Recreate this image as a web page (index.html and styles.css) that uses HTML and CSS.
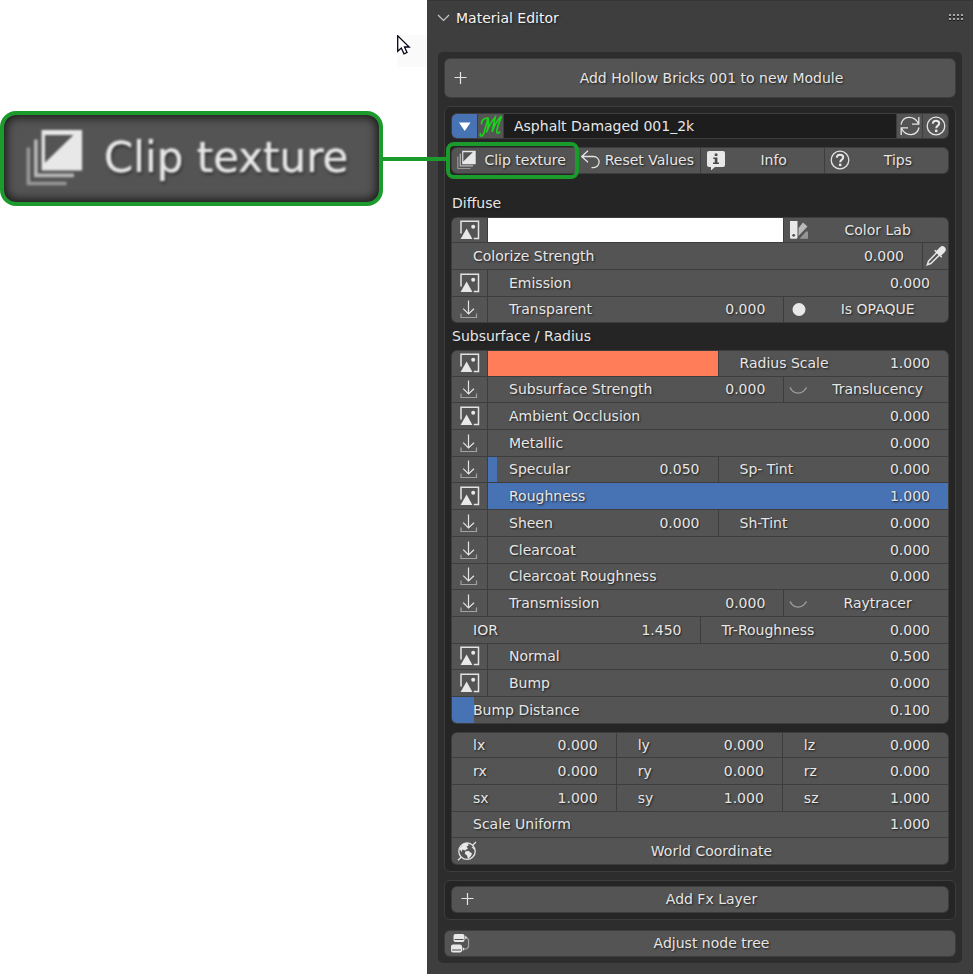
FILE: index.html
```html
<!DOCTYPE html>
<html lang="en">
<head>
<meta charset="utf-8">
<title>Material Editor</title>
<link rel="stylesheet" href="styles.css">
</head>
<body>
<svg class="defs" aria-hidden="true">
  <symbol id="i-image" viewBox="0 0 20 20">
    <path d="M1 13.500V1.200H18.500V18.500H13.800" fill="none" stroke="#e4e4e4" stroke-width="1.500"/>
    <path d="M.6 19 6.600 8.600 12.400 19Z" fill="#e8e8e8"/><circle cx="13.200" cy="6.800" r="2" fill="#e8e8e8"/>
  </symbol>
  <symbol id="i-down" viewBox="0 0 20 20">
    <path d="M1 14.500v4h15.500v-4" fill="none" stroke="#a2a2a2" stroke-width="1.200"/>
    <path d="M8.500 1.500V15M3.200 9.700 8.500 15l5.500-5.300" fill="none" stroke="#e4e4e4" stroke-width="1.200"/>
  </symbol>
  <symbol id="i-layers" viewBox="0 0 20 20">
    <path d="M.8 6.500v12h12.700" fill="none" stroke="#989898" stroke-width="1.200"/>
    <path d="M3.300 3.800V15.800H16" fill="none" stroke="#b8b8b8" stroke-width="1.200"/>
    <path d="M5.200.7H18.700V14.200H5.200ZM6.300 2.300V11.600L15.800 2.300Z" fill="#e8e8e8" fill-rule="evenodd"/>
  </symbol>
  <symbol id="i-undo" viewBox="0 0 20 20">
    <path d="M7 .8.8 6.500 7 12.200M.8 6.500H12.500a5.600 5.600 0 0 1 0 11.200h-2" fill="none" stroke="#e4e4e4" stroke-width="1.300"/>
  </symbol>
  <symbol id="i-info" viewBox="0 0 20 20">
    <path d="M3 1H17a2 2 0 0 1 2 2V15a2 2 0 0 1-2 2H9L5 20.500V17H3a2 2 0 0 1-2-2V3a2 2 0 0 1 2-2Z" fill="#e8e8e8"/>
    <path d="M8.800 3.500h2.600V6H8.800ZM7.300 7.500h4.100v5h1.600V14H7v-1.500h1.800V9H7.300Z" fill="#484848"/>
  </symbol>
  <symbol id="i-help" viewBox="0 0 20 20">
    <circle cx="10" cy="10" r="8.800" fill="none" stroke="#e4e4e4" stroke-width="1.300"/>
    <path d="M6.800 7.600C6.900 5.500 8.200 4.700 10 4.700s3.200 1.100 3.200 2.700c0 2.200-3 2.300-3 4.800" fill="none" stroke="#e8e8e8" stroke-width="2"/>
    <circle cx="10.200" cy="14.900" r="1.400" fill="#e8e8e8"/>
  </symbol>
  <symbol id="i-refresh" viewBox="0 0 20 20">
    <path d="M1 8.500C3-.5 14-1 18.500 7.500M18.800 1V8.200H12M19 11.500C17 20.500 6 21 1.500 12.500M1.200 19V11.800H8" fill="none" stroke="#e4e4e4" stroke-width="1.300"/>
  </symbol>
  <symbol id="i-swatches" viewBox="0 0 20 20">
    <path d="M9.500 8 14 2.500 18.500 6.500 9.500 16Z" fill="#b9b9b9"/>
    <path d="M10.500 18.800 17 11.500h2v7.300Z" fill="#959595"/>
    <path d="M1 1H8.500V16.500a2 2 0 0 1-2 2.300H3a2 2 0 0 1-2-2.300Z" fill="#e8e8e8"/><circle cx="4.700" cy="15.300" r="1.400" fill="#505050"/>
  </symbol>
  <symbol id="i-dropper" viewBox="0 0 20 20">
    <path d="M11 6.300 2.500 15.200 1.300 18.700 4.800 17.500 13.500 9" fill="none" stroke="#e4e4e4" stroke-width="1.500"/>
    <path d="M8.700 4.200 15.700 11.200M10.500 5.700 14.500 1.700a2.600 2.600 0 0 1 3.800 3.800L14.300 9.500Z" fill="#e8e8e8" stroke="#e8e8e8" stroke-width="1.500"/>
  </symbol>
  <symbol id="i-dot" viewBox="0 0 20 20"><circle cx="10" cy="10.500" r="6.500" fill="#e8e8e8"/></symbol>
  <symbol id="i-closed" viewBox="0 0 20 20"><path d="M1 8.500C5 16 13 16 17.500 8.500" fill="none" stroke="#a2a2a2" stroke-width="1.400"/></symbol>
  <symbol id="i-plus" viewBox="0 0 20 20"><path d="M10.500 4V16M4.500 9.500H16.500" fill="none" stroke="#e4e4e4" stroke-width="1.200"/></symbol>
  <symbol id="i-globe" viewBox="0 0 20 20">
    <circle cx="10" cy="10.200" r="8.200" fill="none" stroke="#e4e4e4" stroke-width="1.300"/>
    <path d="M15.500 4.500 19 1M4.300 16 1 19.300" stroke="#e4e4e4" stroke-width="1.300"/>
    <path d="M2.500 7.500 6 3.200 10.500 2l1.200 2.500-2.200 1L11 7.500 8 9.500 5.500 8.500 4.500 11ZM8.300 10.500l3-.8 3.700 2.800-1 2.600-3 2.900-1-3.500-2.200-1.800ZM14.500 6l1.800-.5 1.500 4Z" fill="#e8e8e8"/>
  </symbol>
  <symbol id="i-nodes" viewBox="0 0 20 20">
    <rect x="3.500" y="1" width="11" height="8" rx="2" fill="#e8e8e8"/><path d="M4.500 6.500h9" stroke="#505050"/>
    <rect x="1" y="11.500" width="11" height="8" rx="2" fill="#e8e8e8"/><path d="M2 17h9" stroke="#505050"/>
    <path d="M15 4.500h1.500l2 2v7.500l-2 2H13" fill="none" stroke="#a2a2a2" stroke-width="1.200"/><path d="m15.300 2.500 2 2-2 2ZM12.700 14l2 2-2 2Z" fill="#e8e8e8"/>
  </symbol>
  <symbol id="i-mark" viewBox="0 0 22 22">
    <path d="M1.500 17.500C0 20.500 3 21.500 4.500 17.500L8.500 3.500C9 9 8.500 13 6.800 17 9 11 12.500 5.500 14.800 3 14 8 12.500 13 12 16.500 14 10.500 17.500 5 20.500 2 19 7 16.500 12.500 16.300 16 16.300 18.500 18 18 19.300 16M2.500 9.500C1.500 6 5 3.500 8.300 3.800" fill="none" stroke="#1bd31b" stroke-width="1.500"/>
  </symbol>
</svg>
<main class="page">
  <aside class="guide">
    <div class="pointer"><svg width="14" height="21" viewBox="0 0 14 21"><path d="M.7.800V16.300L4.300 13 7 18.800 10 17.500 7.500 12H12.200Z" fill="#fff" stroke="#05051a" stroke-width="1.300"/></svg></div>
    <div class="callout">
      <div class="callout-card"><svg class="callout-icon"><use href="#i-layers"/></svg><span>Clip texture</span></div>
      <div class="callout-line"></div>
    </div>
  </aside>
  <section class="panel">
    <header class="panel-head">
      <svg class="chevron" viewBox="0 0 13 8"><path d="M1 1 6.500 6.500 12 1" fill="none" stroke="#c8c8c8" stroke-width="1.200"/></svg>
      <h1>Material Editor</h1>
      <svg class="grip" viewBox="0 0 15 8"><path d="M0 2.500h15M0 6.500h15" stroke="#171717" stroke-width="1" stroke-dasharray="2 2"/><path d="M0 1h15M0 5h15" stroke="#a8a8a8" stroke-width="2" stroke-dasharray="2 2"/></svg>
    </header>
    <div class="body">
      <div class="group"><div class="row row-big"><button class="cell btn"><svg><use href="#i-plus"/></svg><span>Add Hollow Bricks 001 to new Module</span></button></div></div>

      <div class="card">
        <div class="group">
          <div class="row slim">
            <button class="cell square active" aria-label="Expand"><svg viewBox="0 0 20 20"><path d="M4 6.500h11.500L9.700 15Z" fill="#fff"/></svg></button>
            <button class="cell square" aria-label="Material"><svg class="mark"><use href="#i-mark"/></svg></button>
            <input class="cell name" aria-label="Material name" value="Asphalt Damaged 001_2k">
            <button class="cell square" aria-label="Refresh"><svg><use href="#i-refresh"/></svg></button>
            <button class="cell square" aria-label="Help"><svg><use href="#i-help"/></svg></button>
          </div>
        </div>
        <div class="group tools">
          <div class="row short">
            <button class="cell btn marked"><svg><use href="#i-layers"/></svg><span>Clip texture</span></button>
            <button class="cell btn"><svg><use href="#i-undo"/></svg><span>Reset Values</span></button>
            <button class="cell btn"><svg><use href="#i-info"/></svg><span>Info</span></button>
            <button class="cell btn"><svg><use href="#i-help"/></svg><span>Tips</span></button>
          </div>
        </div>

        <h2 class="first">Diffuse</h2>
        <div class="group">
          <div class="row slim"><button class="cell pic" aria-label="Diffuse image"><svg><use href="#i-image"/></svg></button><input class="cell swatch" type="color" value="#ffffff" aria-label="Diffuse color"><button class="cell btn third"><svg><use href="#i-swatches"/></svg><span>Color Lab</span></button></div>
          <div class="row"><label class="cell field"><span>Colorize Strength</span><input value="0.000"></label><button class="cell square" aria-label="Pick color"><svg><use href="#i-dropper"/></svg></button></div>
          <div class="row"><button class="cell pic" aria-label="Emission image"><svg><use href="#i-image"/></svg></button><label class="cell field"><span>Emission</span><input value="0.000"></label></div>
          <div class="row short"><button class="cell pic" aria-label="Load transparent"><svg><use href="#i-down"/></svg></button><label class="cell field"><span>Transparent</span><input value="0.000"></label><button class="cell btn third"><svg><use href="#i-dot"/></svg><span>Is OPAQUE</span></button></div>
        </div>

        <h2>Subsurface / Radius</h2>
        <div class="group">
          <div class="row short"><button class="cell pic" aria-label="Subsurface image"><svg><use href="#i-image"/></svg></button><div class="half"><input class="cell swatch" type="color" value="#ff7e59" aria-label="Subsurface color"></div><div class="half"><label class="cell field"><span>Radius Scale</span><input value="1.000"></label></div></div>
          <div class="row short"><button class="cell pic" aria-label="Load subsurface"><svg><use href="#i-down"/></svg></button><label class="cell field"><span>Subsurface Strength</span><input value="0.000"></label><button class="cell btn third"><svg><use href="#i-closed"/></svg><span>Translucency</span></button></div>
          <div class="row"><button class="cell pic" aria-label="Ambient occlusion image"><svg><use href="#i-image"/></svg></button><label class="cell field"><span>Ambient Occlusion</span><input value="0.000"></label></div>
          <div class="row"><button class="cell pic" aria-label="Load metallic"><svg><use href="#i-down"/></svg></button><label class="cell field"><span>Metallic</span><input value="0.000"></label></div>
          <div class="row short"><button class="cell pic" aria-label="Load specular"><svg><use href="#i-down"/></svg></button><label class="cell field fill" style="--fill:4%"><span>Specular</span><input value="0.050"></label><label class="cell field"><span>Sp- Tint</span><input value="0.000"></label></div>
          <div class="row"><button class="cell pic" aria-label="Roughness image"><svg><use href="#i-image"/></svg></button><label class="cell field fill" style="--fill:100%"><span>Roughness</span><input value="1.000"></label></div>
          <div class="row"><button class="cell pic" aria-label="Load sheen"><svg><use href="#i-down"/></svg></button><label class="cell field"><span>Sheen</span><input value="0.000"></label><label class="cell field"><span>Sh-Tint</span><input value="0.000"></label></div>
          <div class="row"><button class="cell pic" aria-label="Load clearcoat"><svg><use href="#i-down"/></svg></button><label class="cell field"><span>Clearcoat</span><input value="0.000"></label></div>
          <div class="row short"><button class="cell pic" aria-label="Load clearcoat roughness"><svg><use href="#i-down"/></svg></button><label class="cell field"><span>Clearcoat Roughness</span><input value="0.000"></label></div>
          <div class="row"><button class="cell pic" aria-label="Load transmission"><svg><use href="#i-down"/></svg></button><label class="cell field"><span>Transmission</span><input value="0.000"></label><button class="cell btn third"><svg><use href="#i-closed"/></svg><span>Raytracer</span></button></div>
          <div class="row"><label class="cell field"><span>IOR</span><input value="1.450"></label><label class="cell field"><span>Tr-Roughness</span><input value="0.000"></label></div>
          <div class="row short"><button class="cell pic" aria-label="Normal image"><svg><use href="#i-image"/></svg></button><label class="cell field"><span>Normal</span><input value="0.500"></label></div>
          <div class="row"><button class="cell pic" aria-label="Bump image"><svg><use href="#i-image"/></svg></button><label class="cell field"><span>Bump</span><input value="0.000"></label></div>
          <div class="row"><label class="cell field fill" style="--fill:4.500%"><span>Bump Distance</span><input value="0.100"></label></div>
        </div>

        <div class="group transform">
          <div class="row slim"><label class="cell field third"><span>lx</span><input value="0.000"></label><label class="cell field"><span>ly</span><input value="0.000"></label><label class="cell field"><span>lz</span><input value="0.000"></label></div>
          <div class="row"><label class="cell field third"><span>rx</span><input value="0.000"></label><label class="cell field"><span>ry</span><input value="0.000"></label><label class="cell field"><span>rz</span><input value="0.000"></label></div>
          <div class="row"><label class="cell field third"><span>sx</span><input value="1.000"></label><label class="cell field"><span>sy</span><input value="1.000"></label><label class="cell field"><span>sz</span><input value="1.000"></label></div>
          <div class="row short"><label class="cell field"><span>Scale Uniform</span><input value="1.000"></label></div>
          <div class="row"><button class="cell btn"><svg><use href="#i-globe"/></svg><span>World Coordinate</span></button></div>
        </div>
      </div>

      <div class="card card-fx"><div class="group"><div class="row short"><button class="cell btn"><svg><use href="#i-plus"/></svg><span>Add Fx Layer</span></button></div></div></div>
      <div class="group"><div class="row short"><button class="cell btn"><svg><use href="#i-nodes"/></svg><span>Adjust node tree</span></button></div></div>
    </div>
  </section>
</main>
</body>
</html>
```
FILE: styles.css
```css
* { box-sizing: border-box; }

body {
  margin: 0;
  background: #fff;
  color: #e6e6e6;
  font: 14px/18px "DejaVu Sans", sans-serif;
}

button, input {
  margin: 0;
  border: 0;
  padding: 0;
  color: inherit;
  font: inherit;
  text-shadow: inherit;
}

.defs { position: absolute; width: 0; height: 0; }

.page {
  display: grid;
  grid-template-columns: 427px minmax(0, 1fr);
  min-height: 100vh;
}

/* Left side: pointer and magnified button */
.guide { padding-top: 35px; }
.pointer {
  width: 30px;
  height: 32px;
  margin: 0 0 44px auto;
  background: #fafafa;
}
.pointer svg { display: block; }
.callout { display: flex; align-items: center; }
.callout-card {
  display: flex;
  align-items: center;
  gap: 18px;
  width: 383px;
  height: 95px;
  padding: 0 0 2px 22px;
  border: 4px solid #1b9b2c;
  border-radius: 16px;
  background: #545454;
  box-shadow: inset 0 0 8px 3px #1e1e1e;
  color: #e8e8e8;
  font-size: 42px;
  line-height: 48px;
  text-shadow: 0 0 1px #e0e0e0, 1px 2px 3px #222;
  white-space: nowrap;
}
.callout-card > * { filter: blur(1px); }
.callout-icon { width: 60px; height: 60px; }
.callout-line {
  position: relative;
  z-index: 1;
  flex: 1;
  height: 4px;
  margin-right: -20px;
  background: #1b9b2c;
}

/* Editor panel */
.panel {
  padding: 0 11px 11px;
  background: #3e3e3e;
  border-top: 1px solid #363636;
  text-shadow: 1px 1px 2px #1c1c1c;
}
.panel-head {
  display: flex;
  align-items: center;
  height: 33px;
  margin-bottom: 18px;
}
.panel-head h1 {
  flex: 1;
  margin: 0 0 0 6px;
  color: #f4f4f4;
  font-size: 14px;
  font-weight: 400;
}
.chevron { width: 13px; height: 8px; margin-left: -1px; }
.grip { width: 15px; height: 8px; margin-right: -2px; }

.body {
  display: grid;
  gap: 8px;
  padding: 6px;
  border-radius: 5px;
  background: #2d2d2d;
}
.card {
  padding: 6px;
  border: 1px solid #3d3d3d;
  border-radius: 6px;
  background: #252525;
}
.card-fx { padding: 5px 6px 6px; margin-bottom: 2px; }
.tools, .transform { margin-top: 8px; }

h2 {
  margin: 0;
  padding: 4px 0 5px 1px;
  font-size: 14px;
  font-weight: 400;
}
h2.first { padding: 20px 0 5px 1px; }

.group {
  display: grid;
  gap: 1px;
  padding: 1px;
  border-radius: 6px;
  background: #3d3d3d;
}
.row { display: flex; gap: 1px; height: 26px; }
.row.short { height: 25px; }
.row.slim { height: 24px; }
.row.row-big { height: 38px; }

.cell { background: #545454; }
.row:first-child > .cell:first-child { border-top-left-radius: 5px; }
.row:first-child > .cell:last-child { border-top-right-radius: 5px; }
.row:last-child > .cell:first-child { border-bottom-left-radius: 5px; }
.row:last-child > .cell:last-child { border-bottom-right-radius: 5px; }

.btn {
  display: flex;
  flex: 1 1 0;
  align-items: center;
  min-width: 0;
  padding: 0 2px 0 5px;
  white-space: nowrap;
}
.btn svg, .pic svg, .square svg { flex: none; width: 20px; height: 20px; }
.btn span { flex: 1; text-align: center; }
.pic, .square {
  display: flex;
  flex: 0 0 35px;
  align-items: center;
  justify-content: center;
}
.square { flex-basis: 25px; }
.active { background: #4772b3; }
.square .mark { width: 24px; height: 24px; }
.name {
  flex: 1;
  min-width: 0;
  padding: 0 10px;
  background: #1d1d1d;
}
.half { display: flex; flex: 1 1 0; min-width: 0; }
.half:last-child .cell { border-top-right-radius: 5px; }
.swatch { flex: 1; min-width: 0; height: 100%; appearance: none; }
.swatch::-webkit-color-swatch-wrapper { padding: 0; }
.swatch::-webkit-color-swatch { border: 0; border-radius: 0; }

.field {
  display: flex;
  flex: 1 1 0;
  align-items: center;
  min-width: 0;
  padding: 0 18px 0 21px;
  white-space: nowrap;
}
.field span { flex: 1; }
.field input { width: 48px; background: none; text-align: right; }
.third { flex: 0 0 33%; }
.fill { background: linear-gradient(#4772b3, #4772b3) left / var(--fill) 100% no-repeat #545454; }
.short .btn, .short .field, .short .pic { padding-bottom: 1px; }

/* Highlight ring around the magnified button's source */
.marked { position: relative; }
.marked::after {
  content: "";
  position: absolute;
  inset: -6px -4px -6px -6px;
  border: 4px solid #1b9b2c;
  border-radius: 8px;
}
```
